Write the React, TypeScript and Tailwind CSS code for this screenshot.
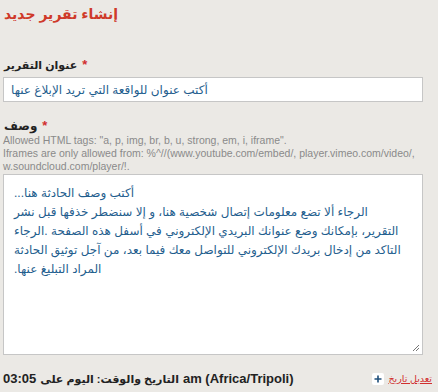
const bodyLines = [
  "أكتب وصف الحادثة هنا...",
  "الرجاء ألا تضع معلومات إتصال شخصية هنا، و إلا سنضطر خذفها قبل نشر",
  "التقرير، بإمكانك وضع عنوانك البريدي الإلكتروني في أسفل هذه الصفحة .الرجاء",
  "التاكد من إدخال بريدك الإلكتروني للتواصل معك فيما بعد، من آجل توثيق الحادثة",
  "المراد التبليغ عنها.",
];

function Required() {
  return <span className="text-[#d12f2f] text-[13px] ml-[5px]">*</span>;
}

export default function App() {
  return (
    <div className="w-[438px] h-[392px] bg-[#ebe9e5] overflow-hidden px-[3px] pt-[5px] font-['Liberation_Sans','DejaVu_Sans',sans-serif]">
      <h1 className="text-[14px] font-bold text-[#cf3a2a] leading-[18px] pl-[1px]">
        إنشاء تقرير جديد
      </h1>

      <div className="mt-[34px]">
        <label className="flex items-center text-[11px] font-bold text-[#222] leading-[16px] pl-[1px]">
          عنوان التقرير
          <Required />
        </label>
        <div className="mt-[4px] w-[420px] h-[25px] bg-white border border-[#c6c6c6] flex items-center px-[7px]">
          <span className="text-[12px] text-[#1f5e8e] whitespace-nowrap" dir="rtl">
            أكتب عنوان للواقعة التي تريد الإبلاغ عنها
          </span>
        </div>
      </div>

      <div className="mt-[16px]">
        <label className="flex items-center text-[12px] font-bold text-[#222] leading-[16px] pl-[1px]">
          وصف
          <Required />
        </label>
        <div className="text-[10.5px] leading-[13px] text-[#8a8a8a]">
          <div>Allowed HTML tags: "a, p, img, br, b, u, strong, em, i, iframe".</div>
          <div>Iframes are only allowed from: %^//(www.youtube.com/embed/, player.vimeo.com/video/,</div>
          <div>w.soundcloud.com/player/!.</div>
        </div>
        <div className="relative mt-[1px] w-[420px] h-[181px] bg-white border border-[#c6c6c6] overflow-hidden pt-[9px] px-[10px]">
          <div dir="rtl" className="text-left text-[12px] leading-[19px] text-[#1f5e8e]">
            {bodyLines.map((l, i) => (
              <div key={i} className="whitespace-nowrap">{l}</div>
            ))}
          </div>
          <svg className="absolute right-[2px] bottom-[2px]" width="8" height="8" viewBox="0 0 8 8">
            <path d="M7 1 L1 7 M7 4 L4 7" stroke="#777" strokeWidth="1" />
          </svg>
        </div>
      </div>

      <div className="mt-[14px] flex items-center justify-between w-[429px]">
        <div className="flex items-baseline gap-[4px] font-bold text-[#222] whitespace-nowrap">
          <span className="text-[13px]">03:05</span>
          <span className="text-[11px]" dir="rtl">التاريخ والوقت: اليوم على</span>
          <span className="text-[13px]">am (Africa/Tripoli)</span>
        </div>
        <div className="flex items-center gap-[4px]">
          <span className="w-[12px] h-[12px] bg-white rounded-[2px] flex items-center justify-center">
            <svg width="8" height="8" viewBox="0 0 8 8">
              <path d="M4 0.5 V7.5 M0.5 4 H7.5" stroke="#1f4f7a" strokeWidth="1.6" />
            </svg>
          </span>
          <a className="text-[9.5px] text-[#d12f2f] underline" href="#">
            تعديل تاريخ
          </a>
        </div>
      </div>
    </div>
  );
}
